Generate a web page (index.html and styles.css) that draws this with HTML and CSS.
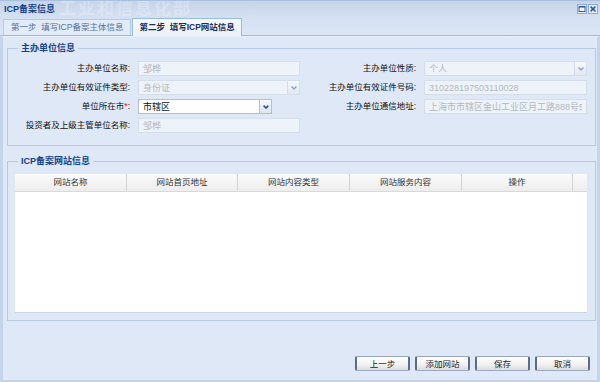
FILE: index.html
```html
<!doctype html>
<html lang="zh-CN">
<head>
	<meta charset="UTF-8">
	<title>ICP备案信息</title>
	<link rel="stylesheet" href="styles.css">
</head>
<body>
	<div class="win">
		<div class="win-head">
			<span class="win-title">ICP备案信息</span>
			<span class="watermark">工业和信息化部</span>
			<span class="win-tools">
				<svg class="tool" width="10" height="10" viewBox="0 0 10 10"><rect x="0.5" y="0.5" width="9" height="9" fill="#e9f0fa" stroke="#8eaad6"/><rect x="2" y="2.5" width="6" height="5" fill="#fff" stroke="#2f5aa6"/><rect x="2" y="2" width="6" height="1.6" fill="#2f5aa6"/></svg>
				<svg class="tool" width="10" height="10" viewBox="0 0 10 10"><rect x="0.5" y="0.5" width="9" height="9" fill="#e9f0fa" stroke="#8eaad6"/><path d="M2.6 2.6 L7.4 7.4 M7.4 2.6 L2.6 7.4" stroke="#2f5aa6" stroke-width="1.6"/></svg>
			</span>
		</div>
		<div class="tabs">
			<span class="tab">第一步&nbsp;&nbsp;填写ICP备案主体信息</span>
			<span class="tab tab-active">第二步&nbsp;&nbsp;填写ICP网站信息</span>
		</div>
		<div class="win-body">
			<fieldset class="box">
				<legend>主办单位信息</legend>
				<div class="form-grid">
					<label class="field-label">主办单位名称:</label>
					<input class="field" disabled value="邹桦">
					<label class="field-label">主办单位性质:</label>
					<div class="combo">
						<input class="field" disabled value="个人">
						<span class="trigger trigger-off"><svg width="6" height="4" viewBox="0 0 6 4"><polyline points="0.6,0.6 3,3 5.4,0.6" fill="none" stroke="#8ea3c6" stroke-width="1.4"/></svg></span>
					</div>

					<label class="field-label">主办单位有效证件类型:</label>
					<div class="combo">
						<input class="field" disabled value="身份证">
						<span class="trigger trigger-off"><svg width="6" height="4" viewBox="0 0 6 4"><polyline points="0.6,0.6 3,3 5.4,0.6" fill="none" stroke="#8ea3c6" stroke-width="1.4"/></svg></span>
					</div>
					<label class="field-label">主办单位有效证件号码:</label>
					<input class="field" disabled value="310228197503110028">

					<label class="field-label">单位所在市<em class="req">*</em>:</label>
					<div class="combo combo-short">
						<input class="field" value="市辖区">
						<span class="trigger"><svg width="6" height="4" viewBox="0 0 6 4"><polyline points="0.6,0.6 3,3 5.4,0.6" fill="none" stroke="#2b4d8c" stroke-width="1.5"/></svg></span>
					</div>
					<label class="field-label">主办单位通信地址:</label>
					<input class="field" disabled value="上海市市辖区金山工业区月工路888号5号楼">

					<label class="field-label">投资者及上级主管单位名称:</label>
					<input class="field" disabled value="邹桦">
				</div>
			</fieldset>

			<fieldset class="box">
				<legend>ICP备案网站信息</legend>
				<div class="grid">
					<div class="grid-head">
						<span>网站名称</span>
						<span>网站首页地址</span>
						<span>网站内容类型</span>
						<span>网站服务内容</span>
						<span>操作</span>
						<span></span>
					</div>
					<div class="grid-body"></div>
				</div>
			</fieldset>

			<div class="footer">
				<button class="btn" type="button">上一步</button>
				<button class="btn" type="button">添加网站</button>
				<button class="btn" type="button">保存</button>
				<button class="btn" type="button">取消</button>
			</div>
		</div>
	</div>
</body>
</html>
```

FILE: styles.css
```css
html,body{margin:0;height:100%;}
body{font-family:"Liberation Sans","Noto Sans CJK SC",sans-serif;font-size:8.5px;color:#222;background:#dfe8f6;}
.win{display:flex;flex-direction:column;height:100%;box-sizing:border-box;border-bottom:2px solid #c3d3ea;}

/* title bar */
.win-head{display:flex;align-items:center;height:16px;padding:0 2px 0 4px;box-sizing:border-box;overflow:hidden;background:linear-gradient(#c6d4e9,#d4e0f1);border-top:1px solid #a9c0e0;}
.win-title{font-size:9px;font-weight:bold;color:#15428b;white-space:nowrap;}
.watermark{margin-left:4px;font-size:17px;line-height:16px;letter-spacing:2px;font-weight:bold;color:rgba(255,255,255,.24);white-space:nowrap;}
.win-tools{margin-left:auto;display:flex;gap:1px;}
.tool{display:block;}

/* tabs */
.tabs{display:flex;align-items:flex-end;gap:1px;height:20px;padding-left:3px;box-sizing:border-box;background:linear-gradient(#d3e0f2,#dbe6f5);border-bottom:1px solid #99bbe8;}
.tab{height:16px;line-height:15px;padding:0 7px;box-sizing:border-box;border:1px solid #b7cbe6;border-bottom:0;background:#e2ebf8;color:#55709c;white-space:nowrap;}
.tab-active{height:18px;margin-bottom:-1px;padding:0 6px;line-height:17px;font-weight:bold;color:#1b2f55;border-color:#99bbe8;background:linear-gradient(#f6f9fe,#ebf1fa);}

/* body */
.win-body{flex:1;display:flex;flex-direction:column;padding:5px 0 0 4px;border-left:3px solid #c3d4ec;border-right:3px solid #c3d4ec;border-top:1px solid #e9f0fa;}
.box{margin:0 1px 0 0;padding:7px 8px 12px 7px;border:1px solid #b8c9e2;min-width:0;}
.box + .box{margin-top:9px;padding-bottom:7px;}
.box legend{margin-left:3px;padding:0 3px;font-size:9px;line-height:12px;font-weight:bold;color:#15428b;}

.form-grid{display:grid;grid-template-columns:117px 162px 1fr 163px;grid-auto-rows:15px;column-gap:6px;row-gap:4px;}
.field-label{text-align:right;padding-right:2px;line-height:15px;white-space:nowrap;color:#111;}
.req{color:#e00000;font-style:normal;}
.field{display:block;width:100%;height:15px;box-sizing:border-box;margin:0;padding:0 4px;border:1px solid #b5bfcd;background:#fff;font:inherit;font-size:9px;line-height:13px;color:#111;outline:none;}
.field:disabled{background:#eef3fa;border-color:#d5deea;color:#b3b9c4;}
.combo{display:flex;}
.combo .field{flex:1;min-width:0;}
.combo-short{width:134px;}
.trigger{display:flex;align-items:center;justify-content:center;flex:none;width:12px;height:15px;box-sizing:border-box;border:1px solid #b5bfcd;border-left:0;background:linear-gradient(#f8fafd,#dde4ee);}
.trigger-off{border-color:#d5deea;background:linear-gradient(#f6f8fb,#e3e8f0);}

/* grid */
.grid{background:#fff;border-bottom:1px solid #cad6e6;}
.grid-head{display:grid;grid-template-columns:112px 111px 112px 112px 111px 1fr;height:18px;box-sizing:border-box;background:linear-gradient(#fbfbfb,#ededed);border-bottom:1px solid #d9d9d9;}
.grid-head span{text-align:center;line-height:17px;border-right:1px solid #d3d3d3;color:#333;}
.grid-head span:last-child{border-right:0;}
.grid-body{height:120px;}

/* buttons */
.footer{margin-top:auto;display:flex;justify-content:flex-end;gap:5px;padding:0 7px 9px 0;}
.btn{width:55px;height:15px;margin:0;padding:0;box-sizing:border-box;border:1px solid #9aa9bf;border-left:2px solid #5c6d88;border-right:2px solid #5c6d88;border-radius:2px;background:linear-gradient(#fff,#f3f3f3 55%,#dcdcdc);font:inherit;line-height:12px;color:#222;cursor:pointer;}
.btn:hover{background:linear-gradient(#fff,#e8eef8);}
```
